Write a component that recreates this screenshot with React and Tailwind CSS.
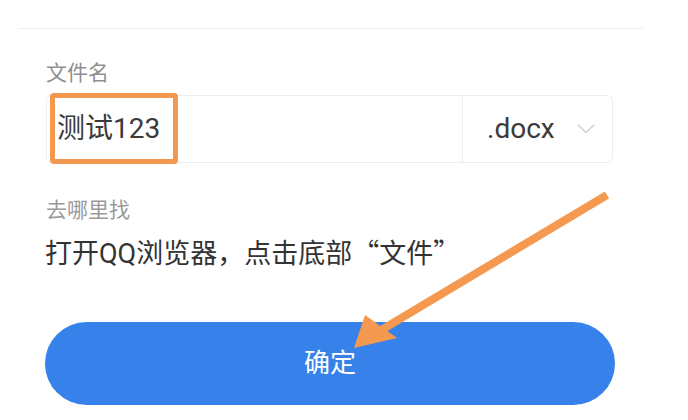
import React from 'react';

const font = { fontFamily: 'Roboto, "Noto Sans CJK SC", sans-serif' };
const cjk = { fontFamily: '"Noto Sans CJK SC", sans-serif' };

const Chevron = () => (
  <svg width="18" height="10" viewBox="0 0 18 10" fill="none">
    <polyline points="1,1 9,8.5 17,1" stroke="#cfcfcf" strokeWidth="1.4" strokeLinejoin="round" strokeLinecap="round" />
  </svg>
);

// orange annotation arrow drawn over the page
const Arrow = () => (
  <svg className="absolute inset-0 pointer-events-none" width="688" height="420" viewBox="0 0 688 420">
    <line x1="607" y1="195" x2="378" y2="332" stroke="#f4994f" strokeWidth="8" strokeLinecap="butt" />
    <polygon points="354,348 365,315 397,338" fill="#f4994f" />
  </svg>
);

export default function App() {
  return (
    <div className="relative w-[688px] h-[420px] bg-white overflow-hidden" style={font}>
      <div className="h-[28px] overflow-hidden">
        <div className="flex text-[26px] leading-[28px] text-[#555] -mt-[27px]">
          <span className="ml-[60px]">取消</span>
          <span className="ml-[198px]">另存为</span>
        </div>
      </div>
      <div className="ml-[18px] w-[625px] h-px bg-[#f0f0f0]" />

      <div className="ml-[46px] mt-[33px] h-[22px] text-[21px] leading-[22px] text-[#8f8f8f]">文件名</div>

      <div className="relative ml-[46px] mt-[11px] w-[567px] h-[68px] flex border border-[#ededed] rounded-[6px]">
        <div className="flex-1 flex items-center pl-[10px] text-[28px] text-[#3a3a3a]">测试123</div>
        <div className="w-[150px] flex items-center border-l border-[#ededed] pl-[24px] pr-[17px]">
          <span className="flex-1 text-[28px] text-[#3a3a3a]">.docx</span>
          <Chevron />
        </div>
        <div className="absolute left-[3px] -top-[3px] w-[128px] h-[71px] border-[5px] border-[#f3994f] rounded-[4px]" />
      </div>

      <div className="ml-[46px] mt-[36px] h-[22px] text-[21px] leading-[22px] text-[#9a9a9a]">去哪里找</div>
      <div className="ml-[45px] mt-[15px] h-[32px] text-[27px] leading-[32px] text-[#333]">
        打开QQ浏览器，点击底部<span style={cjk}>“</span>文件<span style={cjk}>”</span>
      </div>

      <button className="ml-[45px] mt-[54px] w-[570px] h-[83px] rounded-full bg-[#3682ea] text-white text-[26px] flex items-center justify-center">
        确定
      </button>

      <Arrow />
    </div>
  );
}
